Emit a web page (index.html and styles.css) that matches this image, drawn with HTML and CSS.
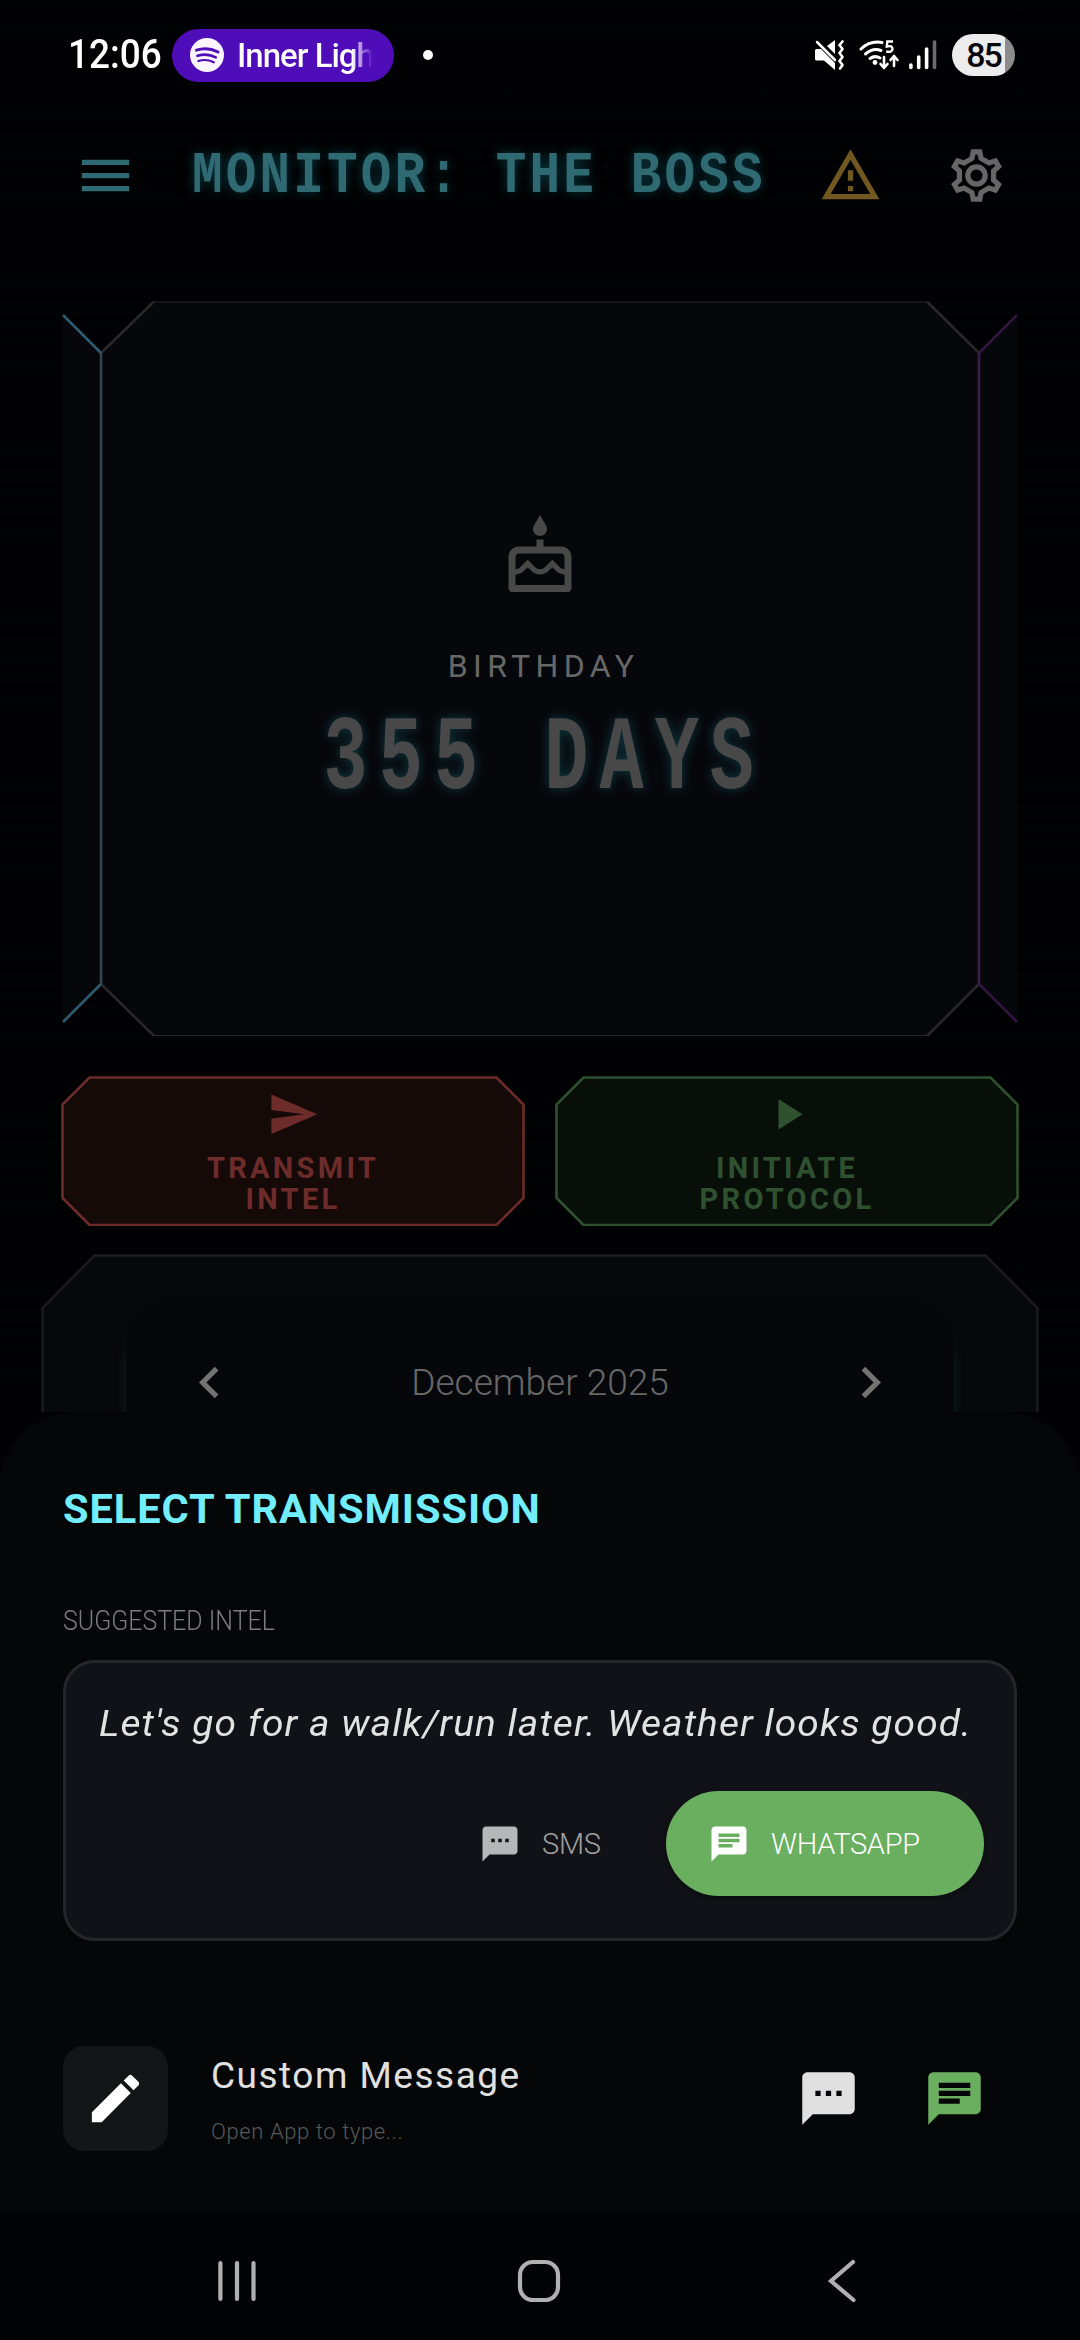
FILE: index.html
```html
<!DOCTYPE html>
<html lang="en">
<head>
<meta charset="utf-8">
<title>Monitor</title>
<link rel="stylesheet" href="styles.css">
</head>
<body>
<div class="screen">
  <header class="status">
    <span class="clock">12:06</span>
    <div class="now-playing">
      <svg class="spotify" viewBox="0 0 34 34"><circle cx="17" cy="17" r="17" fill="#faf5ff"/><g fill="none" stroke="#4f0cb9" stroke-linecap="round"><path d="M6.500 12.200Q17.500 8.500 28 14" stroke-width="3"/><path d="M7.500 17.800Q17 14.800 25.800 19.300" stroke-width="2.600"/><path d="M8.300 23Q16.500 20.500 23.800 24.300" stroke-width="2.200"/></g></svg>
      <span class="track">Inner Ligh</span>
    </div>
    <span class="dot"></span>
    <div class="status-icons">
      <svg width="30" height="30" viewBox="0 0 30 30"><path d="M0 10.500Q0 9 1.500 9H6L20 23V30L9 20.500H1.500Q0 20.500 0 19zM12 6L20 0V14z" fill="#fff"/><path d="M2 2L20 20" stroke="#fff" stroke-width="2.500" stroke-linecap="round"/><path d="M27.500 1.500L24.500 5L27.500 9L24.500 13L27.500 17L24.500 21L27.500 25L25 28.500" fill="none" stroke="#fff" stroke-width="2.600" stroke-linejoin="round" stroke-linecap="round"/></svg>
      <svg class="wifi" width="41" height="30" viewBox="0 0 41 30"><g fill="none" stroke="#fff" stroke-width="3" stroke-linecap="round"><path d="M2 9Q11 0.500 23 2.500"/><path d="M6.500 14Q14 7.500 22 10.500"/><path d="M11 18.500Q16 15 21 18"/></g><circle cx="16" cy="22.500" r="2.400" fill="#fff"/><path d="M34 1.500H28.300L27.800 6.500Q33.500 5 33.500 9Q33 13 27.200 11.500" fill="none" stroke="#fff" stroke-width="2.400"/><path d="M25 17V27M21.500 24L25 28L28.500 24M35 26V16M31.500 20L35 16L38.500 20" fill="none" stroke="#fff" stroke-width="2.600" stroke-linecap="round" stroke-linejoin="round"/></svg>
      <svg class="signal" width="28" height="30" viewBox="0 0 28 30"><g stroke-width="3.600" stroke-linecap="round" stroke="#fff"><path d="M1.900 25V27.500M9.700 17V27.500M17.600 9V27.500"/><path d="M25.500 2V27.500" stroke="#6c6c6c"/></g></svg>
      <div class="battery"><span>85</span></div>
    </div>
  </header>

  <nav class="topbar">
    <svg class="icon menu" viewBox="0 0 24 24"><path d="M3 18h18v-2H3v2zm0-5h18v-2H3v2zm0-7v2h18V6H3z"/></svg>
    <h1>MONITOR: THE BOSS</h1>
    <svg class="icon warn" viewBox="0 0 24 24"><path d="M12 5.990L19.530 19H4.470L12 5.990M12 2L1 21h22L12 2zm1 14h-2v2h2v-2zm0-6h-2v4h2v-4z"/></svg>
    <svg class="icon gear" viewBox="-12 -12 24 24"><path d="M-1.750-6.500L-1.250-9H1.250L1.750-6.500L4.750-4.770L7.170-5.580L8.420-3.420L6.500-1.730V1.730L8.420 3.420L7.170 5.580L4.750 4.770L1.750 6.500L1.250 9H-1.250L-1.750 6.500L-4.750 4.770L-7.170 5.580L-8.420 3.420L-6.500 1.730V-1.730L-8.420-3.420L-7.170-5.580L-4.750-4.770Z"/><circle r="3.300"/></svg>
  </nav>

  <section class="stage">
    <svg class="frame" viewBox="0 0 956 736">
      <path d="M1 14L39 52V683L1 721z" fill="#05070a"/>
      <path d="M955 14L917 52V683L955 721z" fill="#05070a"/>
      <path d="M39 52L91.500 1H865.500L917 52V683L865.500 734.500H91.500L39 683z" fill="#06070b"/>
      <g fill="none" stroke-width="2.600">
        <path d="M39 52L91.500 1M865.500 1L917 52M917 683L865.500 734.500M91.500 734.500L39 683" stroke="#27282a"/>
        <path d="M91 1H866M866 734.500H91" stroke="#27282a" stroke-width="1.200"/>
        <path d="M1 14L39 52M39 683L1 721" stroke="#315b73"/>
        <path d="M39 52V683" stroke="#33444f"/>
        <path d="M955 14L917 52M917 683L955 721" stroke="#341440"/>
        <path d="M917 52V683" stroke="#3c1d48"/>
      </g>
    </svg>
    <div class="event">
      <svg class="cake" viewBox="0 0 24 24"><path d="M12 6c1.110 0 2-.9 2-2 0-.38-.1-.73-.29-1.030L12 0l-1.710 2.970c-.19.3-.29.65-.29 1.030 0 1.100.9 2 2 2zm6 3h-5V7h-2v2H6c-1.660 0-3 1.340-3 3v9c0 .55.45 1 1 1h16c.55 0 1-.45 1-1v-9c0-1.660-1.340-3-3-3zm1 11H5v-3c.9-.01 1.760-.37 2.400-1.010l1.090-1.070 1.070 1.070c1.310 1.310 3.590 1.300 4.890 0l1.080-1.070 1.070 1.070c.64.64 1.500 1 2.400 1.010v3zm0-4.500c-.51-.01-.99-.2-1.350-.57l-2.130-2.130-2.140 2.130c-.74.74-2.030.74-2.770 0L8.480 12.800l-2.140 2.130c-.35.36-.83.56-1.340.57V12c0-.55.45-1 1-1h12c.55 0 1 .45 1 1v3.500z"/></svg>
      <span class="event-name">BIRTHDAY</span>
      <strong class="event-count">355 DAYS</strong>
    </div>
  </section>

  <section class="actions">
    <div class="action red">
      <svg class="frame" viewBox="0 0 464 150"><path d="M28.500 1.500H435.500L462.500 28.500V122L435.500 149H28.500L1.500 122V28.500z"/></svg>
      <div class="action-body">
        <svg class="glyph" viewBox="0 0 24 24"><path d="M2.010 21L23 12 2.010 3 2 10l15 2-15 2z"/></svg>
        <span>TRANSMIT<br>INTEL</span>
      </div>
    </div>
    <div class="action green">
      <svg class="frame" viewBox="0 0 464 150"><path d="M28.500 1.500H435.500L462.500 28.500V122L435.500 149H28.500L1.500 122V28.500z"/></svg>
      <div class="action-body">
        <svg class="glyph" viewBox="0 0 24 24"><path d="M8 5v14l11-7z"/></svg>
        <span>INITIATE<br>PROTOCOL</span>
      </div>
    </div>
  </section>

  <section class="calendar">
    <svg class="frame" viewBox="0 0 998 158"><path d="M1.500 162V54L53.500 1.500H944.500L996.500 54V162" fill="#07080b" stroke="#1b1c1e" stroke-width="2.400"/></svg>
    <div class="month">
      <svg class="icon" viewBox="0 0 24 24"><path d="M15.410 7.410L14 6l-6 6 6 6 1.410-1.410L10.830 12z"/></svg>
      <span>December 2025</span>
      <svg class="icon" viewBox="0 0 24 24"><path d="M10 6L8.590 7.410 13.170 12l-4.580 4.590L10 18l6-6z"/></svg>
    </div>
  </section>

  <section class="sheet">
    <h2>SELECT TRANSMISSION</h2>
    <p class="eyebrow">SUGGESTED INTEL</p>
    <div class="suggestion">
      <p class="message">Let's go for a walk/run later. Weather looks good.</p>
      <div class="buttons">
        <div class="btn sms">
          <svg viewBox="0 0 24 24"><path d="M20 2H4c-1.100 0-2 .9-2 2v18l4-4h14c1.100 0 2-.9 2-2V4c0-1.100-.9-2-2-2zM9 11H7V9h2v2zm4 0h-2V9h2v2zm4 0h-2V9h2v2z"/></svg>
          <span>SMS</span>
        </div>
        <div class="btn whatsapp">
          <svg viewBox="0 0 24 24"><path d="M20 2H4c-1.100 0-2 .9-2 2v18l4-4h14c1.100 0 2-.9 2-2V4c0-1.100-.9-2-2-2zM6 9h12v2H6V9zm8 5H6v-2h8v2zm4-6H6V6h12v2z"/></svg>
          <span>WHATSAPP</span>
        </div>
      </div>
    </div>
    <div class="custom">
      <div class="tile"><svg class="icon" viewBox="0 0 24 24"><path d="M3 17.250V21h3.750L17.810 9.940l-3.750-3.750L3 17.250zM20.710 7.040c.39-.39.39-1.020 0-1.410l-2.340-2.340c-.39-.39-1.020-.39-1.410 0l-1.830 1.830 3.750 3.750 1.830-1.830z"/></svg></div>
      <div class="custom-text">
        <span class="custom-title">Custom Message</span>
        <span class="custom-sub">Open App to type...</span>
      </div>
      <svg class="icon light" viewBox="0 0 24 24"><path d="M20 2H4c-1.100 0-2 .9-2 2v18l4-4h14c1.100 0 2-.9 2-2V4c0-1.100-.9-2-2-2zM9 11H7V9h2v2zm4 0h-2V9h2v2zm4 0h-2V9h2v2z"/></svg>
      <svg class="icon chat" viewBox="0 0 24 24"><path d="M20 2H4c-1.100 0-2 .9-2 2v18l4-4h14c1.100 0 2-.9 2-2V4c0-1.100-.9-2-2-2zM6 9h12v2H6V9zm8 5H6v-2h8v2zm4-6H6V6h12v2z"/></svg>
    </div>
    <footer class="navbar">
      <svg viewBox="0 0 44 44"><path d="M5.400 4V40M22 4V40M38.500 4V40"/></svg>
      <svg viewBox="0 0 44 44"><rect x="3" y="3" width="38" height="38" rx="13"/></svg>
      <svg viewBox="0 0 44 44"><path d="M34 3L12 22L34.500 41"/></svg>
    </footer>
  </section>
</div>
</body>
</html>
```

FILE: styles.css
```css
* { box-sizing: border-box; }

body {
  margin: 0;
  background: #000102;
  font-family: Roboto, "Liberation Sans", sans-serif;
}

h1, h2, p { margin: 0; }
svg { display: block; flex: none; }
span, h1, h2, p, strong { white-space: nowrap; }

.screen {
  position: relative;
  width: 1080px;
  height: 2340px;
  overflow: hidden;
  background: repeating-linear-gradient(180deg, #000102 0, #000102 7px, #030405 9.500px, #000102 10.500px);
}

.icon { width: 63px; height: 63px; fill: currentColor; }

/* status bar */
.status {
  display: flex;
  align-items: center;
  height: 110px;
  padding: 0 65px 0 68px;
}

.clock {
  width: 104px;
  font-size: 41px;
  font-weight: 500;
  color: #fff;
  transform: scaleX(.9);
  transform-origin: left;
  margin-top: -2px;
}

.now-playing {
  display: flex;
  align-items: center;
  gap: 13px;
  width: 222px;
  height: 53px;
  padding: 0 18px;
  border-radius: 27px;
  background: #4f0cb9;
}

.spotify { width: 34px; height: 34px; }

.track {
  font-size: 33px;
  font-weight: 500;
  letter-spacing: -1px;
  background: linear-gradient(90deg, #fff 84%, rgba(255, 255, 255, 0) 99%);
  -webkit-background-clip: text;
  background-clip: text;
  color: transparent;
}

.dot { width: 10px; height: 10px; margin-left: 29px; border-radius: 50%; background: #fff; }

.status-icons { display: flex; align-items: center; margin-left: auto; }
.wifi { margin-left: 14px; }
.signal { margin: 0 15px 0 9px; }

.battery {
  display: grid;
  place-items: center;
  width: 63px;
  height: 42px;
  border-radius: 21px;
  background: linear-gradient(90deg, #ececec 53px, #8c8c8c 53px);
  color: #08080c;
  font-size: 34px;
  font-weight: 500;
  letter-spacing: -2px;
}

/* app bar */
.topbar {
  display: flex;
  align-items: center;
  height: 131px;
  padding: 0 73.500px;
}

.menu { color: #2f6a73; }

.topbar h1 {
  width: 627px;
  margin-left: 55px;
  font: bold 60px/70px "Liberation Mono", monospace;
  letter-spacing: 3.700px;
  color: #2f6a73;
  text-shadow: 0 0 12px rgba(20, 120, 135, .5);
  transform: scaleX(.85);
  transform-origin: left;
}

.warn { color: #705820; }
.gear { margin-left: 63px; fill: none; stroke: #666; stroke-width: 2; }

/* countdown card */
.stage, .action, .calendar { display: grid; }
.stage > *, .action > *, .calendar > * { grid-area: 1 / 1; }

.stage { height: 736px; margin: 60px 62px 0; }
.frame { width: 100%; height: 100%; }

.event {
  display: flex;
  flex-direction: column;
  align-items: center;
  padding-top: 214px;
}

.cake { width: 84px; height: 84px; fill: #484848; }

.event-name {
  margin-top: 46px;
  padding-left: 7px;
  font-size: 32px;
  line-height: 42px;
  letter-spacing: 5.400px;
  color: #676767;
}

.event-count {
  margin-top: 19px;
  padding-left: 13px;
  font: bold 105px/110px "Liberation Mono", monospace;
  letter-spacing: 15.800px;
  color: #484848;
  text-shadow: 0 0 14px rgba(25, 110, 120, .5);
  transform: scaleX(.7);
}

/* action buttons */
.actions {
  display: grid;
  grid-template-columns: 464px 464px;
  justify-content: space-between;
  height: 150px;
  margin: 39px 61px 0;
}

.action .frame path { stroke-width: 2.600; stroke: currentColor; }
.red { color: #6d2c2a; }
.red .frame { fill: #160a09; }
.green { color: #2f5130; }
.green .frame { fill: #080f08; }

.action-body {
  display: flex;
  flex-direction: column;
  align-items: center;
  padding-top: 12px;
  font-size: 29px;
  font-weight: 700;
  line-height: 31px;
  letter-spacing: 3.300px;
  text-align: center;
}

.glyph { width: 52.500px; height: 52.500px; margin-bottom: 12px; fill: currentColor; }

/* calendar */
.calendar {
  grid-template-rows: 158px;
  height: 158px;
  margin: 28px 41px 0;
  overflow: hidden;
}

.month {
  display: flex;
  align-items: center;
  justify-content: space-between;
  height: 180px;
  margin: 42px 85px 0;
  padding: 0 52px 8px;
  border-radius: 46px 46px 0 0;
  background: #06070a;
  box-shadow: 0 22px 12px 0 rgba(22, 80, 90, .32);
  color: #737373;
}

.month span {
  font-size: 37px;
  font-weight: 300;
  color: #686868;
}

/* bottom sheet */
.sheet {
  position: absolute;
  inset: 1413px 0 0;
  display: flex;
  flex-direction: column;
  padding: 74px 63px 0;
  border-radius: 74px 74px 0 0;
  background: linear-gradient(180deg, #040607 801px, #020305 801px);
}

.sheet h2 {
  font-size: 41.500px;
  line-height: 44px;
  letter-spacing: .95px;
  color: #72edfc;
}

.eyebrow {
  margin-top: 74px;
  font-size: 28px;
  line-height: 32px;
  font-weight: 300;
  color: #7c7c7c;
  transform: scaleX(.89);
  transform-origin: left;
}

.suggestion {
  display: flex;
  flex-direction: column;
  justify-content: space-between;
  width: 954px;
  height: 281px;
  margin-top: 23px;
  padding: 37px 30px 42px 33px;
  border: 3px solid #24262b;
  border-radius: 32px;
  background: #111217;
}

.message {
  font-size: 36px;
  line-height: 48px;
  font-style: italic;
  letter-spacing: 1px;
  color: #e2e2e2;
  transform: scaleX(1.08);
  transform-origin: left;
}

.buttons { display: flex; justify-content: flex-end; }

.btn {
  display: flex;
  align-items: center;
  gap: 21px;
  height: 105px;
  font-size: 29px;
  font-weight: 300;
  letter-spacing: -.3px;
}

.btn svg { width: 42px; height: 42px; fill: currentColor; }
.sms { width: 187px; color: #b5b6b7; }
.sms span { color: #a0a0a0; }

.whatsapp {
  width: 318px;
  padding-left: 42px;
  border-radius: 53px;
  background: #6aae5f;
  color: #fff;
  box-shadow: 0 3px 5px rgba(0, 0, 0, .4);
}

.custom {
  display: flex;
  align-items: center;
  height: 105px;
  margin-top: 105px;
  padding-right: 31px;
}

.tile {
  display: grid;
  place-items: center;
  width: 105px;
  height: 105px;
  border-radius: 21px;
  background: #141517;
  color: #fff;
}

.custom-text {
  display: flex;
  flex-direction: column;
  width: 586px;
  margin-left: 43px;
}

.custom-title {
  font-size: 37px;
  line-height: 48px;
  letter-spacing: 1.500px;
  color: #e0e0e0;
}

.custom-sub {
  margin-top: 19px;
  font-size: 22px;
  line-height: 26px;
  font-weight: 300;
  letter-spacing: .6px;
  color: #585858;
}

.light { color: #e0e0e0; }
.chat { margin-left: 63px; color: #6aae5f; }

.navbar {
  display: flex;
  justify-content: space-between;
  margin-top: 108px;
  padding: 0 154px 0 152px;
  fill: none;
}

.navbar svg {
  width: 44px;
  height: 44px;
  stroke: #b0b0b0;
  stroke-width: 4.200;
  stroke-linecap: round;
}
```
